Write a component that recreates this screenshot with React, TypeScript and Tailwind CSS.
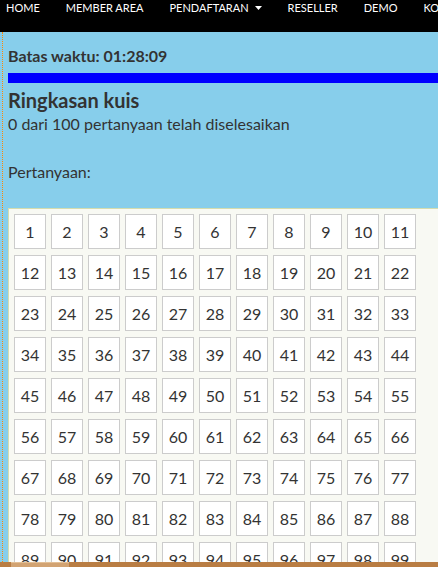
const navItems = ['HOME', 'MEMBER AREA', 'PENDAFTARAN', 'RESELLER', 'DEMO', 'KONTAK'];

const questions = Array.from({ length: 100 }, (_, i) => i + 1);

const App = () => {
  return (
    <div className="min-h-screen w-[438px] overflow-hidden bg-[#87ceeb] font-['Lato','Open_Sans',sans-serif] text-[#333]">
      {/* Top navigation */}
      <nav className="flex h-8 items-start gap-[26px] whitespace-nowrap bg-black pl-[6px] pt-[1px] text-[11px] leading-[14px] text-white">
        {navItems.map(item => (
          <span key={item} className="flex items-center gap-[6px]">
            {item}
            {item === 'PENDAFTARAN' && (
              <svg width="7" height="4" viewBox="0 0 7 4" className="fill-white">
                <path d="M0 0h7L3.5 4z" />
              </svg>
            )}
          </span>
        ))}
      </nav>

      <div className="ml-[2px] min-h-[535px] border-l border-dotted border-orange-400 pl-[5px]">
        <div className="pt-[14px] text-[16px] font-bold leading-[20px]">Batas waktu: 01:28:09</div>
        <div className="mt-[7px] h-[10px] w-[440px] bg-[#0000ff]" />

        <h2 className="mt-[5px] text-[20px] font-bold leading-[24px]">Ringkasan kuis</h2>
        <p className="mt-[1px] text-[16px] leading-[22px]">0 dari 100 pertanyaan telah diselesaikan</p>

        <p className="mt-[26px] text-[16px] leading-[22px]">Pertanyaan:</p>

        <div className="mt-[25px] w-[440px] border border-[#d4dcae] bg-[#f8f9f3] p-[5px]">
          <div className="grid grid-cols-[repeat(11,32px)] gap-x-[5px] gap-y-[6px]">
            {questions.map(n => (
              <div
                key={n}
                className="flex h-[35px] items-center justify-center border border-[#cccccc] bg-white text-[16px] text-[#333]"
              >
                {n}
              </div>
            ))}
          </div>
        </div>
      </div>

      {/* Bottom bar */}
      <div className="fixed bottom-0 left-0 right-0 h-[5px] bg-[#b97d43]">
        <div className="ml-[11px] h-full w-[58px] border-t border-[#e3bf95] bg-[#d2a372]" />
      </div>
    </div>
  );
};

export default App;
